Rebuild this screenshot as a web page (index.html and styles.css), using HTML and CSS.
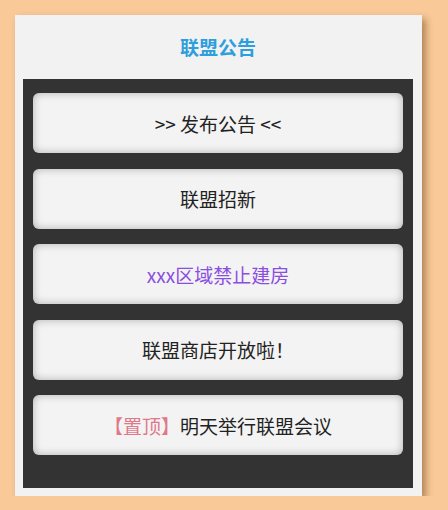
FILE: index.html
```html
<!DOCTYPE html>
<html lang="zh">
<head>
  <meta charset="UTF-8">
  <title>联盟公告</title>
  <link rel="stylesheet" href="styles.css">
</head>
<body>

  <div class="card">
    <h1 class="title">联盟公告</h1>

    <div class="panel">
      <div class="notice">&gt;&gt; 发布公告 &lt;&lt;</div>
      <div class="notice">联盟招新</div>
      <div class="notice purple">xxx区域禁止建房</div>
      <div class="notice">联盟商店开放啦！</div>
      <div class="notice"><span class="top">【置顶】</span>明天举行联盟会议</div>
    </div>
  </div>

</body>
</html>
```

FILE: styles.css
```css
body {
  margin: 0;
  background-color: #f9c998;
  font-family: "Microsoft YaHei", "Noto Sans CJK SC", sans-serif;
}

.card {
  width: 390px;
  margin: 15px 0 0 15px;
  padding: 0 9px 8px 8px;
  background-color: #f2f2f2;
  box-shadow: 4px 4px 7px rgba(90, 50, 10, 0.45);
}

.title {
  margin: 0;
  height: 64px;
  line-height: 64px;
  text-align: center;
  font-size: 19px;
  font-weight: bold;
  color: #2e9fdc;
}

.panel {
  background-color: #333333;
  padding: 14px 10px 33px 10px;
  display: flex;
  flex-direction: column;
  gap: 15.5px;
}

.notice {
  height: 60px;
  display: flex;
  align-items: center;
  justify-content: center;
  background-color: #f3f3f3;
  border-radius: 6px;
  box-shadow: inset 0 0 8px rgba(0, 0, 0, 0.28);
  font-size: 19px;
  color: #222;
}

.purple {
  color: #8a4ee0;
}

.top {
  color: #e0788a;
}
```
